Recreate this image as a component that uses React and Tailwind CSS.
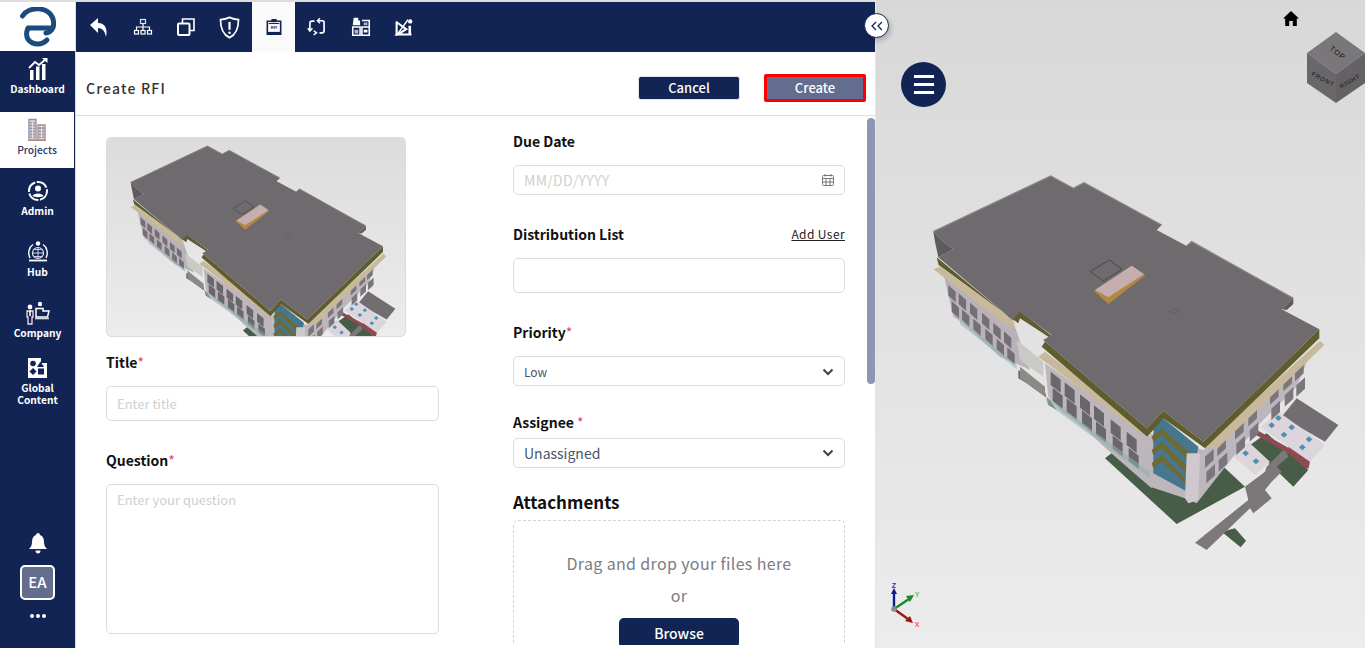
const NAVY = "#112454";

function win(x, y, w = 30, h = 40, dy = 24) {
  return `${x},${y} ${x + w},${y + dy} ${x + w},${y + dy + h} ${x},${y + h}`;
}
function rwin(x, y, w = 26, h = 34, dy = 24) {
  return `${x},${y} ${x + w},${y - dy} ${x + w},${y - dy + h} ${x},${y + h}`;
}
const midWins = [[392, 605], [434, 637], [480, 673], [522, 706], [572, 748], [620, 785]];
const leftWins = [[85, 345], [116, 370], [150, 398], [186, 428], [220, 458], [252, 484]];
const rightWins = [[855, 860], [892, 825], [945, 775], [985, 735], [1050, 670], [1090, 630], [1125, 600]];
const blueSquares = [[1075, 744], [1055, 766], [1115, 772], [1092, 794], [1167, 808], [1147, 832], [977, 850], [1008, 874]];

function Building() {
  return (
    <svg viewBox="0 0 1290 1170" className="w-full h-full">
      <polygon points="555,865 770,1062 975,950 905,885 700,900 600,830" fill="#475d47" />
      <polygon points="990,825 1120,950 1165,900 1040,790" fill="#475d47" />
      <polygon points="905,1085 945,1075 978,1112 962,1132" fill="#475d47" />
      <polygon points="825,1118 985,990 975,950 1035,905 1040,890 1095,835 1105,860 1070,890 1085,905 1055,935 1035,960 1055,985 1000,1030 990,1015 860,1140" fill="#7c7878" />
      <polygon points="1085,740 1130,685 1255,765 1215,815" fill="#716d70" />
      <polygon points="1010,780 1100,830 1165,880 1160,897 1105,850 1008,795" fill="#8e4a52" />
      <polygon points="1022,772 1075,725 1215,825 1170,875" fill="#dcd6dc" />
      <polygon points="935,855 985,815 1050,875 1005,915" fill="#dcd6dc" />
      <polygon points="1105,830 1170,875 1165,897 1105,850" fill="#8e4a52" />
      {blueSquares.map(([x, y]) => (
        <polygon key={`${x}-${y}`} points={`${x - 10},${y} ${x},${y - 9} ${x + 10},${y} ${x},${y + 9}`} fill="#4d8fb0" />
      ))}
      <polygon points="70,310 285,470 330,600 310,590 240,560 130,460 100,440" fill="#b9b2ba" />
      <polygon points="295,600 375,665 385,705 410,720 390,690 320,640 295,625" fill="#6a686a" />
      <polygon points="290,510 370,575 370,620 300,570" fill="#c9c9c5" />
      <polygon points="300,590 375,650 375,680 300,625" fill="#8b8a86" />
      <polygon points="375,580 690,800 695,955 660,925 560,838 500,780 420,720 385,680" fill="#bdb6bd" />
      <polygon points="690,790 850,840 1165,565 1130,650 1010,770 830,1000 795,985 690,950" fill="#bdb6bd" />
      <polygon points="700,760 730,745 835,830 810,970 700,910" fill="#47778f" />
      <polygon points="695,800 725,775 810,850 805,870 725,795 700,815" fill="#6e6a34" />
      <polygon points="695,840 725,815 805,890 800,910 725,835 700,855" fill="#6e6a34" />
      <polygon points="695,880 725,855 800,930 800,945 725,875 700,895" fill="#6e6a34" />
      <polygon points="800,850 840,850 835,990 805,1000 795,985" fill="#cfc8cf" />
      {midWins.map(([x, y]) => (
        <g key={`${x}-${y}`}>
          <polygon points={win(x, y)} fill="#6a676b" />
          <polygon points={win(x + 6, y + 48)} fill="#6a676b" />
        </g>
      ))}
      {leftWins.map(([x, y]) => (
        <g key={`${x}-${y}`}>
          <polygon points={win(x, y, 22, 32, 20)} fill="#736f75" />
          <polygon points={win(x + 10, y + 48, 22, 32, 20)} fill="#736f75" />
        </g>
      ))}
      {rightWins.map(([x, y]) => (
        <g key={`${x}-${y}`}>
          <polygon points={rwin(x, y)} fill="#7a767b" />
          <polygon points={rwin(x + 4, y + 46)} fill="#7a767b" />
        </g>
      ))}
      <polygon points="380,680 690,905 690,925 380,700" fill="#8fb2b1" opacity="0.55" />
      <polygon points="120,450 290,585 290,597 120,462" fill="#8fb2b1" opacity="0.55" />
      <polygon points="40,298 60,290 280,448 285,470 265,470" fill="#c9b99b" />
      <polygon points="355,560 375,545 672,772 660,790" fill="#c9b99b" />
      <polygon points="862,820 1200,512 1213,525 885,842" fill="#c9b99b" />
      <polygon points="50,262 278,450 280,430 302,425 395,497 370,510 680,775 730,722 850,815 1198,478 1198,505 855,835 730,745 682,800 365,530 385,500 300,445 295,460 56,285" fill="#5f5c2e" />
      <polygon points="40,185 70,215 100,238 55,262 45,215" fill="#5d5b5d" />
      <polygon points="1120,385 1120,402 1100,420 1085,418" fill="#5d5b5d" />
      <polygon points="40,185 392,18 460,55 492,38 725,165 710,180 800,228 815,215 1120,385 1085,418 1198,478 850,815 730,722 680,775 370,510 395,495 300,425 278,450 55,262 100,238 70,215" fill="#6e6a6e" />
      <polyline points="40,185 392,18 460,55 492,38 725,165" fill="none" stroke="#858286" strokeWidth="4" />
      <polyline points="800,228 815,215 1120,385" fill="none" stroke="#858286" strokeWidth="4" />
      <polygon points="510,305 568,270 606,298 550,333" fill="none" stroke="#333" strokeWidth="2" />
      <polygon points="522,362 635,287 676,316 565,402" fill="#b6883f" />
      <polygon points="525,360 635,287 672,312 565,382" fill="#c4aeb0" />
      <polygon points="750,425 765,416 776,424 762,432" fill="none" stroke="#555" strokeWidth="1.5" />
    </svg>
  );
}

function I({ children, w = 24, h = 24, vb = "0 0 24 24", cls = "" }) {
  return (
    <svg width={w} height={h} viewBox={vb} fill="none" className={cls}>
      {children}
    </svg>
  );
}

function Logo() {
  return (
    <svg width="36" height="40" viewBox="0 0 36 40" fill="none" stroke="#1b4a7c" strokeWidth="5">
      <path d="M2.5 9 C9 -1 29 -1 33 12 C35 20 32 25 26 26" strokeLinecap="round" />
      <path d="M8 21 H33" />
      <path d="M8 21 C4 30 9 37 18 37 C22 37 25 35 27 33" strokeLinecap="round" />
    </svg>
  );
}

const tabIcons = [
  <I key="a"><path d="M3 10 L11 3 V8 C18 8 21 14 19 22 C18 16 15 13 11 13 V18 Z" fill="#fff" /></I>,
  <I key="b" w={20} h={20} vb="0 0 20 20">
    <g stroke="#fff" strokeWidth="1.2">
      <rect x="7.5" y="2.5" width="5" height="4" stroke="#dfe4f0" />
      <path d="M10 7 V10 M3.5 13 V10 H16.5 V13 M10 10 V13" />
      <rect x="1.5" y="13.5" width="4" height="3.5" />
      <rect x="8" y="13.5" width="4" height="3.5" />
      <rect x="14.5" y="13.5" width="4" height="3.5" />
    </g>
  </I>,
  <I key="c" w={20} h={20} vb="0 0 20 20">
    <path d="M6.5 6 V2 H18 V13.5 H14" stroke="#fff" strokeWidth="1.6" />
    <rect x="2" y="6.5" width="11.5" height="11.5" rx="1" stroke="#fff" strokeWidth="2" />
  </I>,
  <I key="d" w={27} h={27}>
    <path d="M4 5 C8 5 10 4 12 3 C14 4 16 5 20 5 C20 13 18 18 12 21 C6 18 4 13 4 5 Z" stroke="#fff" strokeWidth="1.5" />
    <path d="M12 7 V14" stroke="#fff" strokeWidth="2" />
    <circle cx="12" cy="16.6" r="1.1" fill="#fff" />
  </I>,
  <I key="e" w={16} h={18} vb="0 0 18 20">
    <path d="M1.5 3.5 H16.5 V18 H1.5 Z" fill="#fff" stroke={NAVY} strokeWidth="1.8" />
    <rect x="1" y="15.5" width="16" height="3.5" fill={NAVY} />
    <rect x="6" y="1" width="6" height="3.6" fill={NAVY} />
    <rect x="3" y="5.5" width="12" height="1.2" fill={NAVY} />
    <text x="9" y="12.5" textAnchor="middle" fontSize="4.5" fontWeight="700" fill={NAVY} fontFamily="Liberation Sans, sans-serif">RFI</text>
  </I>,
  <I key="f" w={20} h={20}>
    <path d="M9 5 H6 C4.5 5 3.5 6 3.5 7.5 V16" stroke="#fff" strokeWidth="2" />
    <path d="M1 13.5 L3.5 17 L6.5 13.5" stroke="#fff" strokeWidth="1.7" />
    <path d="M15 19 H18 C19.5 19 20.5 18 20.5 16.5 V6 C20.5 5 19.5 4.5 18 4.5 H13" stroke="#fff" strokeWidth="2" />
    <path d="M15.5 1.5 L12.5 4.5 L15.5 7.5" stroke="#fff" strokeWidth="1.7" />
    <path d="M8 21.5 L11.5 19 L8 16.5" stroke="#fff" strokeWidth="1.7" />
  </I>,
  <I key="g" w={22} h={22}>
    <path d="M4 2 H9 V5 H11 V10 H3 Z" fill="#fff" />
    <path d="M13 5 H21 V12 M3 12 H11 V21 H3 Z M13 12 H21 V21 H13 Z" stroke="#fff" strokeWidth="1.7" />
    <path d="M5 15 H9 V19 H5 Z M15 7 H19 V10 H15 Z" fill="#aab6d6" />
    <path d="M15 15 H19 V18 H15 Z" fill="#fff" />
  </I>,
  <I key="h" w={21} h={21}>
    <path d="M3 6 L14 14 L4 20 H20" stroke="#fff" strokeWidth="2.4" />
    <path d="M3 5 V21" stroke="#fff" strokeWidth="2.4" />
    <path d="M18 10 V20" stroke="#fff" strokeWidth="3" />
    <circle cx="18.5" cy="5" r="2.5" fill="#fff" />
    <path d="M3 21 L16 3" stroke="#fff" strokeWidth="1.8" />
  </I>,
];

const DashIcon = (
  <I w={22} h={24} vb="0 0 22 24">
    <path d="M2 11 L8 5 L12 8 L19 2" stroke="#fff" strokeWidth="1.8" />
    <path d="M15 1 H20.5 V6 Z" fill="#fff" />
    <path d="M3 13 H6.5 V23 H3 Z M9 9.5 H12.5 V23 H9 Z M15 7 H18.5 V23 H15 Z" fill="#fff" />
  </I>
);
const ProjIcon = (
  <I w={20} h={24} vb="0 0 20 24">
    <path d="M2 1.5 H9 V22 H2 Z" stroke="#9b8ea0" strokeWidth="1.4" fill="#e8d9d6" />
    <path d="M11 7 H18 V22 H11 Z" stroke="#b08a86" strokeWidth="1.4" fill="#e8d9d6" />
    <path d="M4 4 V20 M7 4 V20 M13 9 V20 M16 9 V20" stroke="#4e6aa5" strokeWidth="1.2" />
    <path d="M3 6 H8 M3 9 H8 M3 12 H8 M3 15 H8 M3 18 H8 M12 12 H17 M12 15 H17 M12 18 H17" stroke="#f0eaea" strokeWidth="1" />
    <path d="M1 22.5 H19" stroke="#b08a86" strokeWidth="1" />
  </I>
);
const AdminIcon = (
  <I>
    <circle cx="12" cy="12" r="9" stroke="#fff" strokeWidth="2" strokeDasharray="12 1.6" />
    <circle cx="12" cy="9.5" r="3" fill="#fff" />
    <path d="M6.5 17 C7.5 13.5 16.5 13.5 17.5 17 C15 18.5 9 18.5 6.5 17 Z" fill="#fff" />
  </I>
);
const HubIcon = (
  <I vb="0 0 24 24">
    <circle cx="12" cy="3.5" r="2.2" fill="#fff" />
    <path d="M7 4.5 C3 7 1.5 13 4 18 M17 4.5 C21 7 22.5 13 20 18" stroke="#fff" strokeWidth="1.4" />
    <circle cx="12" cy="13" r="5.5" stroke="#dfe4f0" strokeWidth="1.2" />
    <path d="M6.5 13 H17.5 M12 7.5 V18.5 M8.5 9.5 H15.5 M8.5 16.5 H15.5" stroke="#dfe4f0" strokeWidth="0.9" />
    <path d="M3 20.5 H21" stroke="#fff" strokeWidth="1.8" />
  </I>
);
const CompanyIcon = (
  <I w={26} h={24} vb="0 0 26 24">
    <circle cx="5" cy="6" r="2.4" fill="#fff" />
    <path d="M2 10 H8 V16 H7 V23 H3 V16 H2 Z" stroke="#f5dede" strokeWidth="1.3" />
    <path d="M4.2 9.5 H5.8 V15 H4.2 Z" fill="#fff" />
    <circle cx="15" cy="3" r="2.2" fill="#fff" />
    <path d="M11 7.5 H18 V10 H24 L22.5 16 H11 Z" stroke="#fff" strokeWidth="1.5" />
    <path d="M10 17.5 H24" stroke="#d8dbe6" strokeWidth="1.6" />
  </I>
);
const GlobalIcon = (
  <I w={22} h={22} vb="0 0 22 22">
    <path d="M1 1 H14 V6 H20 V21 H1 Z" fill="#fff" />
    <circle cx="6" cy="6.5" r="2.8" fill={NAVY} />
    <path d="M13.5 4.5 L17 10 H10 Z" fill={NAVY} />
    <path d="M6 11 L9.5 14.5 L6 18 L2.5 14.5 Z" fill={NAVY} />
    <rect x="11" y="11.5" width="6" height="6" fill={NAVY} />
  </I>
);

function NavItem({ icon, label, active }) {
  return (
    <div
      className={`box-content h-[50px] pb-[6px] flex flex-col items-center justify-center text-[10.2px] leading-[12px] text-center ${
        active ? "bg-white text-[#27386b] font-medium mr-px" : "text-white font-bold"
      }`}
    >
      <div className="h-[24px] flex items-center justify-center">{icon}</div>
      <div className="mt-[2px]">{label}</div>
    </div>
  );
}

function Label({ children, star }) {
  return (
    <div className="text-[14px] leading-[20px] font-semibold text-[#111]">
      {children}
      {star && <span className="text-[#e0455c] font-normal">{star}</span>}
    </div>
  );
}

const field = "w-full border border-[#dcdcdc] rounded-[5px] bg-white px-[10px] text-[13px] outline-none placeholder:text-[#cfcfcf]";

function Chevron() {
  return (
    <svg width="12" height="8" viewBox="0 0 12 8" fill="none">
      <path d="M1.5 1.5 L6 6 L10.5 1.5" stroke="#3b4252" strokeWidth="2" />
    </svg>
  );
}

function SelectBox({ value, cls }) {
  return (
    <div className={`h-[30px] flex items-center justify-between border border-[#dcdcdc] rounded-[5px] pl-[10px] pr-[10px] text-[#4a5568] ${cls}`}>
      <span>{value}</span>
      <Chevron />
    </div>
  );
}

export default function App() {
  return (
    <div
      className="w-[1365px] h-[648px] flex pt-[2px] bg-[#dddddd] overflow-hidden text-[#222]"
      style={{ fontFamily: '"Noto Sans CJK JP", "Noto Sans", sans-serif' }}
    >
      <aside className="w-[75px] shrink-0 bg-[#112454] flex flex-col">
        <div className="h-[49px] bg-white flex items-center justify-center shrink-0">
          <Logo />
        </div>
        <div className="flex flex-col gap-[5px]">
          <NavItem icon={DashIcon} label="Dashboard" />
          <NavItem icon={ProjIcon} label="Projects" active />
          <NavItem icon={AdminIcon} label="Admin" />
          <NavItem icon={HubIcon} label="Hub" />
          <NavItem icon={CompanyIcon} label="Company" />
          <NavItem icon={GlobalIcon} label={<>Global<br />Content</>} />
        </div>
        <div className="mt-auto pb-[30px] flex flex-col items-center">
          <svg width="18" height="21" viewBox="0 0 18 21" fill="#fff">
            <path d="M9 0 C10.3 0 11 1 11 2 C14 3 15 6 15 9 C15 12 16 14 18 16 H0 C2 14 3 12 3 9 C3 6 4 3 7 2 C7 1 7.7 0 9 0 Z" />
            <path d="M6.5 17.5 H11.5 C11.5 19.5 10.5 20.5 9 20.5 C7.5 20.5 6.5 19.5 6.5 17.5 Z" />
          </svg>
          <div className="mt-[11px] w-[35px] h-[35px] rounded-[5px] border-2 border-white bg-[#636e8f] text-white text-[15px] font-medium flex items-center justify-center">
            EA
          </div>
          <div className="mt-[14px] flex gap-[2px]">
            <span className="w-[4px] h-[4px] rounded-full bg-white" />
            <span className="w-[4px] h-[4px] rounded-full bg-white" />
            <span className="w-[4px] h-[4px] rounded-full bg-white" />
          </div>
        </div>
      </aside>

      <main className="w-[800px] shrink-0 ml-px -mr-px bg-white flex flex-col relative">
        <div className="h-[50px] bg-[#112454] flex pl-px shrink-0">
          {tabIcons.map((ic, i) => (
            <div key={i} className={`w-[43.7px] h-full flex items-center justify-center ${i === 4 ? "bg-[#fafafa]" : ""}`}>
              {ic}
            </div>
          ))}
        </div>
        <div className="h-[64px] shrink-0 border-b border-[#dedede] flex items-center pl-[10px] pr-[10px] pt-[9px]">
          <div className="text-[14px] font-medium tracking-[1.2px] text-[#333]">Create RFI</div>
          <button className="ml-auto w-[102px] h-[24px] rounded-[3px] bg-[#112454] text-white text-[13px] font-medium border border-[#dfe3ec]">
            Cancel
          </button>
          <button className="ml-[24px] w-[102px] h-[28px] border-[3px] border-[#ff0000] rounded-[2px] bg-[#636e8f] text-white text-[13px] font-medium">
            Create
          </button>
        </div>

        <div className="flex-1 min-h-0 mb-[3px] overflow-hidden relative flex pl-[30px] pt-[21px]">
          <div className="w-[333px] shrink-0">
            <div className="w-[300px] h-[200px] rounded-[5px] border border-[#dcdcdc] bg-gradient-to-b from-[#dcdcdc] to-[#ececec] overflow-hidden relative">
              <div className="absolute left-[15px] top-[4px] w-[281px] h-[255px]">
                <Building />
              </div>
            </div>
            <div className="mt-[15px]"><Label star="*">Title</Label></div>
            <input placeholder="Enter title" readOnly className={`${field} mt-[14px] h-[35px] block`} />
            <div className="mt-[29px]"><Label star="*">Question</Label></div>
            <textarea placeholder="Enter your question" readOnly className={`${field} mt-[14px] h-[150px] block py-[5px] resize-none`} />
          </div>

          <div className="ml-[74px] w-[332px] shrink-0 -mt-[6px]">
            <Label>Due Date</Label>
            <div className="mt-[14px] h-[30px] flex items-center justify-between border border-[#dcdcdc] rounded-[5px] pl-[10px] pr-[10px]">
              <span className="text-[#cfcfcf] text-[14px] tracking-[0.3px]">MM/DD/YYYY</span>
              <svg width="12" height="12" viewBox="0 0 12 12" fill="none" stroke="#777">
                <rect x="0.5" y="1.5" width="11" height="10" rx="1" />
                <path d="M0.5 4.5 H11.5 M4 4.5 V11.5 M8 4.5 V11.5 M0.5 8 H11.5 M3 0 V2.5 M9 0 V2.5" />
              </svg>
            </div>
            <div className="mt-[29px] flex items-center justify-between">
              <Label>Distribution List</Label>
              <span className="text-[12px] underline tracking-[0.4px] text-[#222]">Add User</span>
            </div>
            <div className="mt-[14px] h-[35px] border border-[#dcdcdc] rounded-[5px]" />
            <div className="mt-[29px]"><Label star="*">Priority</Label></div>
            <SelectBox value="Low" cls="mt-[14px] text-[12px] pt-px" />
            <div className="mt-[26px]"><Label star=" *">Assignee</Label></div>
            <SelectBox value="Unassigned" cls="mt-[6px] text-[14px]" />
            <div className="mt-[21px] text-[17px] leading-[26px] font-semibold text-[#111]">Attachments</div>
            <div className="mt-[5px] h-[160px] border border-dashed border-[#d4d4d4] rounded-[5px] flex flex-col items-center pt-[29px] text-[#7c7c84] text-[16px] leading-[26px] tracking-[0.35px]">
              <div>Drag and drop your files here</div>
              <div className="mt-[6px]">or</div>
              <button className="mt-[10px] w-[120px] h-[30px] rounded-[5px] bg-[#112454] text-white text-[14px] font-medium tracking-normal flex justify-center pt-[2px] leading-[26px]">
                Browse
              </button>
            </div>
          </div>

          <div className="absolute right-[1px] top-[2px] w-[8px] h-[266px] rounded-[4px] bg-[#8d97b3]" />
        </div>

        <div className="absolute -right-[13px] top-[11px] w-[25px] h-[25px] rounded-full bg-white border border-[#112454] shadow-[2px_3px_5px_rgba(0,0,0,0.2)] flex items-center justify-center z-10">
          <svg width="14" height="10" viewBox="0 0 14 10" fill="none" stroke="#112454" strokeWidth="1.3">
            <path d="M6 1 L2 5 L6 9 M12 1 L8 5 L12 9" />
          </svg>
        </div>
      </main>

      <section className="relative flex-1 -mt-[2px] bg-gradient-to-b from-[#d8d8d8] to-[#ececec] border-l border-[#e6e6e6] overflow-hidden">
        <div className="absolute left-[25px] top-[62px] w-[45px] h-[45px] rounded-full bg-[#112454] flex flex-col items-center justify-center gap-[5px]">
          <span className="w-[20px] h-[3px] bg-white" />
          <span className="w-[20px] h-[3px] bg-white" />
          <span className="w-[20px] h-[3px] bg-white" />
        </div>
        <svg className="absolute left-[407px] top-[11px]" width="16" height="15" viewBox="0 0 16 15" fill="#000">
          <path d="M8 0 L16 7.5 H13.8 V15 H9.8 V10 H6.2 V15 H2.2 V7.5 H0 Z" />
        </svg>
        <svg className="absolute left-[431px] top-[32px]" width="58" height="72" viewBox="0 0 58 72">
          <polygon points="0,21 29,0 58,21 29,42" fill="#7a777b" />
          <polygon points="0,21 29,42 29,71 0,51" fill="#6a676b" />
          <polygon points="58,21 29,42 29,71 58,51" fill="#656266" />
          <text transform="translate(29,23) rotate(38)" textAnchor="middle" fontSize="7.5" letterSpacing="0.8" fill="#111" fontFamily="Liberation Sans, sans-serif">TOP</text>
          <text transform="translate(15,49) rotate(28)" textAnchor="middle" fontSize="6" letterSpacing="0.8" fill="#111" fontFamily="Liberation Sans, sans-serif">FRONT</text>
          <text transform="translate(44,51) rotate(-30)" textAnchor="middle" fontSize="6" letterSpacing="0.8" fill="#111" fontFamily="Liberation Sans, sans-serif">RIGHT</text>
        </svg>
        <div className="absolute left-[44px] top-[170px] w-[430px] h-[390px]">
          <Building />
        </div>
        <svg className="absolute left-[10px] top-[583px]" width="36" height="46" viewBox="0 0 36 46" fill="none">
          <path d="M8 26 V9" stroke="#0b1f8a" strokeWidth="2.4" />
          <path d="M5 11 L8 5 L11 11 Z" fill="#0b1f8a" />
          <path d="M8 26 L23 16" stroke="#1d8a2c" strokeWidth="2.4" />
          <path d="M20 13 L28 12 L24 19 Z" fill="#1d8a2c" />
          <path d="M8 26 L22 36" stroke="#9c1414" strokeWidth="2.4" />
          <path d="M19 38 L27 40 L24 33 Z" fill="#9c1414" />
          <circle cx="8" cy="26" r="2.8" fill="#8a8a8a" />
          <text x="8" y="5" textAnchor="middle" fontSize="7" fontWeight="700" fill="#2233cc" fontFamily="Liberation Sans, sans-serif">Z</text>
          <text x="31" y="14" textAnchor="middle" fontSize="7" fontWeight="700" fill="#4fd05a" fontFamily="Liberation Sans, sans-serif">Y</text>
          <text x="31" y="44" textAnchor="middle" fontSize="7" fontWeight="700" fill="#ff5a5a" fontFamily="Liberation Sans, sans-serif">X</text>
        </svg>
      </section>
    </div>
  );
}
